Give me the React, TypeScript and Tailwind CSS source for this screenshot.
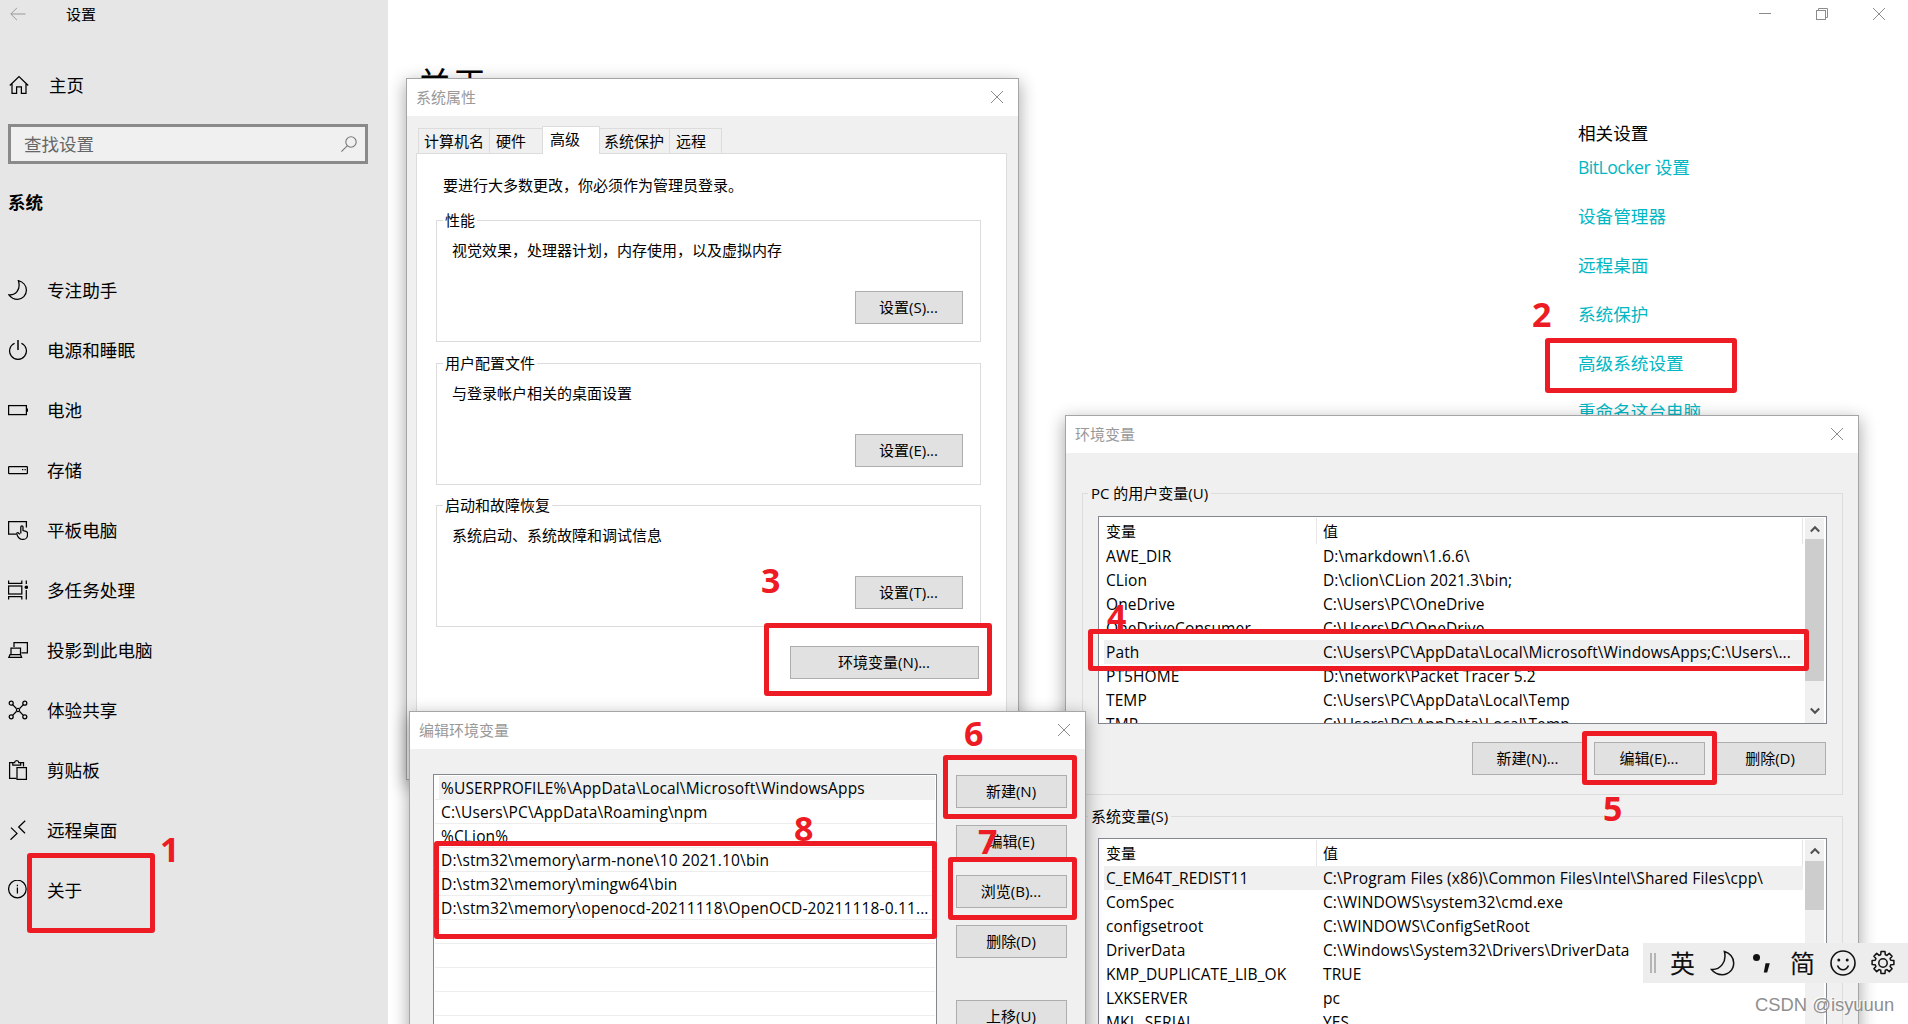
import type { ReactNode } from "react";
import clsx from "clsx";

type Row = [string, string];

const userVars: Row[] = [
  ["AWE_DIR", "D:\\markdown\\1.6.6\\"],
  ["CLion", "D:\\clion\\CLion 2021.3\\bin;"],
  ["OneDrive", "C:\\Users\\PC\\OneDrive"],
  ["OneDriveConsumer", "C:\\Users\\PC\\OneDrive"],
  ["Path", "C:\\Users\\PC\\AppData\\Local\\Microsoft\\WindowsApps;C:\\Users\\..."],
  ["PT5HOME", "D:\\network\\Packet Tracer 5.2"],
  ["TEMP", "C:\\Users\\PC\\AppData\\Local\\Temp"],
  ["TMP", "C:\\Users\\PC\\AppData\\Local\\Temp"],
];

const systemVars: Row[] = [
  ["C_EM64T_REDIST11", "C:\\Program Files (x86)\\Common Files\\Intel\\Shared Files\\cpp\\"],
  ["ComSpec", "C:\\WINDOWS\\system32\\cmd.exe"],
  ["configsetroot", "C:\\WINDOWS\\ConfigSetRoot"],
  ["DriverData", "C:\\Windows\\System32\\Drivers\\DriverData"],
  ["KMP_DUPLICATE_LIB_OK", "TRUE"],
  ["LXKSERVER", "pc"],
  ["MKL_SERIAL", "YES"],
];

const pathEntries = [
  "%USERPROFILE%\\AppData\\Local\\Microsoft\\WindowsApps",
  "C:\\Users\\PC\\AppData\\Roaming\\npm",
  "%CLion%",
  "D:\\stm32\\memory\\arm-none\\10 2021.10\\bin",
  "D:\\stm32\\memory\\mingw64\\bin",
  "D:\\stm32\\memory\\openocd-20211118\\OpenOCD-20211118-0.11...",
  "",
  "",
  "",
  "",
  "",
];

const groups = [
  { title: "性能", text: "视觉效果，处理器计划，内存使用，以及虚拟内存", button: "设置(S)..." },
  { title: "用户配置文件", text: "与登录帐户相关的桌面设置", button: "设置(E)..." },
  { title: "启动和故障恢复", text: "系统启动、系统故障和调试信息", button: "设置(T)..." },
];

const links = ["设备管理器", "远程桌面", "系统保护", "高级系统设置", "重命名这台电脑"];

function Icon({ children, className }: { children: ReactNode; className?: string }) {
  return (
    <svg
      viewBox="0 0 20 20"
      fill="none"
      stroke="currentColor"
      strokeWidth="1.25"
      className={clsx("size-5 shrink-0", className)}
    >
      {children}
    </svg>
  );
}

const navItems: { label: string; icon: ReactNode }[] = [
  { label: "专注助手", icon: <path d="M10.4.7c4.6 1.2 8 4.9 8 9.6 0 5-3.9 9-8.7 9-3.7 0-7-2-8.8-4.5 6.6.8 12.2-5.3 9.5-14.1z" /> },
  {
    label: "电源和睡眠",
    icon: (
      <>
        <path d="M6.6 3.3a8.4 8.4 0 1 0 6.8 0" />
        <path d="M10 0v10" strokeWidth="1.5" />
      </>
    ),
  },
  {
    label: "电池",
    icon: (
      <>
        <rect x=".6" y="5.6" width="17.8" height="9" />
        <path d="M19.4 8.5v3.2" />
      </>
    ),
  },
  {
    label: "存储",
    icon: (
      <>
        <rect x=".6" y="6.6" width="18.8" height="7" rx=".6" />
        <path d="M14 9.5h1.3M16.5 9.5h1.3" />
      </>
    ),
  },
  {
    label: "平板电脑",
    icon: (
      <>
        <path d="M8.5 14H.6V1.6h17.8v6" />
        <path d="M12.8 13.5V7c0-1.6 2.2-1.6 2.2 0v3.6l3 .7c1 .3 1.5 1 1.5 2v1.6c0 2.7-2 4.5-4.5 4.5-3 0-4.5-1.5-5.4-3.5l-.8-2c-.3-1.2 1-1.7 1.8-.9l1.2 1.3" />
      </>
    ),
  },
  {
    label: "多任务处理",
    icon: (
      <>
        <path d="M.6.5v2.9h13.2V.5M.6 19.5v-2.9h13.2v2.9M18.3.5v3.5M18.3 10v9.5" />
        <rect x=".6" y="6" width="13.2" height="8" />
        <circle cx="18.3" cy="7.3" r="1.8" fill="currentColor" stroke="none" />
      </>
    ),
  },
  {
    label: "投影到此电脑",
    icon: (
      <>
        <path d="M6 7V2.6h13.4v10.2h-6" />
        <path d="M3 14.5V8h9.5v6.5M.8 17.4h12.8l-1-2.7H2z" />
      </>
    ),
  },
  {
    label: "体验共享",
    icon: (
      <>
        <path d="m4.6 4.6 3.8 3.9M15.4 4.6l-3.8 3.9M4.6 15.4l3.8-3.9M15.4 15.4l-3.8-3.9" />
        <circle cx="3.2" cy="3.2" r="2" />
        <circle cx="16.8" cy="3.2" r="2" />
        <circle cx="3.2" cy="16.8" r="2" />
        <circle cx="16.8" cy="16.8" r="2" />
        <circle cx="10" cy="10" r="1.6" />
      </>
    ),
  },
  {
    label: "剪贴板",
    icon: (
      <>
        <path d="M8.4 18.4H1.6V2.6H5M12.5 2.6h3v4" />
        <path d="M4.8 5V2.6h1.8c.2-2.6 4-2.6 4.2 0h1.9V5z" />
        <rect x="9" y="7.6" width="9.4" height="11.8" />
      </>
    ),
  },
  { label: "远程桌面", icon: <path d="m3 7.6 6 5.8-6.5 6.3M17.2.8 10.7 7l6.3 6.3" /> },
  {
    label: "关于",
    icon: (
      <>
        <circle cx="9.4" cy="9" r="8.8" />
        <path d="M9.4 7.5v6M9.4 4.8v1.4" />
      </>
    ),
  },
];

function Close() {
  return (
    <svg viewBox="0 0 14 14" fill="none" stroke="#8c8c8c" className="size-3.5">
      <path d="m1 1 12 12M13 1 1 13" />
    </svg>
  );
}

function Dialog({ title, className, children }: { title: string; className: string; children: ReactNode }) {
  return (
    <section
      className={clsx(
        "absolute flex flex-col border border-[#a5a5a5] bg-[#f0f0f0] text-[15px] leading-5 shadow-[0_5px_16px_1px_rgba(0,0,0,0.33)]",
        className,
      )}
    >
      <header className="flex h-[37px] shrink-0 items-center justify-between bg-white pr-[14px] pb-px pl-[9px] text-[#999]">
        <span className="-mt-px">{title}</span>
        <Close />
      </header>
      {children}
    </section>
  );
}

function Button({ children, className = "w-[111px]" }: { children: ReactNode; className?: string }) {
  return (
    <button className={clsx("h-[33px] shrink-0 border border-[#adadad] bg-[#e1e1e1] pr-px text-center leading-[31px]", className)}>
      {children}
    </button>
  );
}

function Chevron({ down }: { down?: boolean }) {
  return (
    <svg viewBox="0 0 10 8" fill="none" stroke="#505050" strokeWidth="2" className="h-2 w-2.5">
      <path d={down ? "m.8 1.5 4.2 4.3 4.2-4.3" : "m.8 6.5 4.2-4.3 4.2 4.3"} />
    </svg>
  );
}

function VarList({ rows, selected, className, thumb }: { rows: Row[]; selected: number; className: string; thumb: string }) {
  return (
    <div className={clsx("ml-[15px] flex w-[729px] overflow-hidden border border-[#828790] bg-white pt-px", className)}>
      <div className="w-[706px] pr-0.5">
        <div className="flex h-[26px] border-r border-[#e5e5e5] leading-[26px]">
          <div className="w-[218px] border-r border-[#e5e5e5] pl-[7px]">变量</div>
          <div className="pl-[6px]">值</div>
        </div>
        {rows.map(([name, value], i) => (
          <div
            key={name}
            className={clsx(
              "ml-[5px] flex h-6 text-[15.5px] leading-[25px] tracking-[0.11px] whitespace-nowrap",
              i === selected && "bg-[#f0f0f0]",
            )}
          >
            <div className="w-[217px] shrink-0 pl-[2px]">{name}</div>
            <div className="pl-[2px]">{value}</div>
          </div>
        ))}
      </div>
      <div className="flex w-[19px] flex-col items-center bg-[#f0f0f0]">
        <div className="flex h-[21px] shrink-0 items-center">
          <Chevron />
        </div>
        <div className={clsx("w-full bg-[#cdcdcd]", thumb)} />
        <div className="mt-auto flex h-[22px] items-center pb-0.5">
          <Chevron down />
        </div>
      </div>
    </div>
  );
}

/* Numbered red markers drawn over the windows */
function Frame({ className }: { className: string }) {
  return <div className={clsx("absolute rounded-[3px] border-[5px] border-[#ed1c24]", className)} />;
}

function Num({ n, className }: { n: number; className: string }) {
  return <div className={clsx("absolute text-[34px] leading-9 font-bold text-[#ed1c24]", className)}>{n}</div>;
}

function Sidebar() {
  return (
    <aside className="flex h-full w-[388px] flex-col bg-[#e6e6e6]">
      <div className="flex h-[29px] items-center pl-2.5 text-[15px]">
        <svg viewBox="0 0 16 14" fill="none" stroke="#999" className="-mt-0.5 mr-10 h-3.5 w-4">
          <path d="M.8 7H15.5M7 .8.8 7 7 13.2" />
        </svg>
        设置
      </div>
      <div className="mt-[41px] flex h-[30px] items-center pl-[9px]">
        <Icon className="mr-5">
          <path d="m.8 10.5 9.2-9 9.2 9M3 8.8v9.6h4.6v-6.6h4.8v6.6H17V8.8" />
        </Icon>
        主页
      </div>
      <div className="mt-6 ml-2 flex h-10 w-[360px] items-center justify-between border-[3px] border-[#8a8a8a] bg-[#f0f0f0] pr-2 pl-[13px] text-[#666]">
        查找设置
        <svg viewBox="0 0 16 16" fill="none" stroke="#777" strokeWidth="1.1" className="size-4">
          <circle cx="10" cy="6" r="5.2" />
          <path d="M6.2 9.8.4 15.6" />
        </svg>
      </div>
      <h2 className="mt-[23px] ml-2 h-[30px] leading-[30px] font-bold">系统</h2>
      <nav className="mt-[43px]">
        {navItems.map((item) => (
          <div key={item.label} className="flex h-[60px] items-center pl-2">
            <Icon className="mr-5">{item.icon}</Icon>
            <span className="-ml-px text-[17.6px]">{item.label}</span>
          </div>
        ))}
      </nav>
    </aside>
  );
}

function SystemProperties() {
  return (
    <Dialog title="系统属性" className="top-[78px] left-[406px] h-[702px] w-[613px]">
      <div className="mt-2.5 flex h-7 items-end pl-[11px]">
        <div className="h-[26px] w-[71px] border-t border-l border-[#dcdcdc] pl-[5px] leading-[25px]">计算机名</div>
        <div className="h-[26px] w-[53px] border-t border-l border-[#dcdcdc] pl-[6px] leading-[25px]">硬件</div>
        <div className="relative h-7 w-[58px] border-x border-t border-[#dcdcdc] bg-white pl-[7px] leading-6">高级</div>
        <div className="h-[26px] w-[69px] border-t border-[#dcdcdc] pl-[4px] leading-[25px]">系统保护</div>
        <div className="h-[26px] w-[53px] border-x border-t border-[#dcdcdc] pl-[6px] leading-[25px]">远程</div>
      </div>
      <div className="-mt-px ml-[9px] flex h-[615px] w-[591px] flex-col border border-[#dcdcdc] bg-white">
        <p className="mt-[21px] mb-1 pl-[26px]">要进行大多数更改，你必须作为管理员登录。</p>
        {groups.map((g, i) => (
          <fieldset
            key={g.title}
            className={clsx("ml-[19px] h-[132px] w-[545px] border border-[#dcdcdc]", i === 2 ? "mt-2.5" : "mt-[11px]")}
          >
            <legend className="ml-[6px] px-[2px]">{g.title}</legend>
            <p className="mt-2.5 pl-[15px]">{g.text}</p>
            <div className="mt-[31px] mr-[17px] flex justify-end">
              <Button className="w-[108px]">{g.button}</Button>
            </div>
          </fieldset>
        ))}
        <div className="mt-[19px] mr-[27px] flex justify-end">
          <Button className="w-[189px]">环境变量(N)...</Button>
        </div>
      </div>
    </Dialog>
  );
}

function EnvironmentVariables() {
  return (
    <Dialog title="环境变量" className="top-[415px] left-[1065px] h-[720px] w-[794px]">
      <fieldset className="mt-[30px] ml-4 h-[312px] w-[761px] shrink-0 border border-[#dcdcdc]">
        <legend className="ml-[5px] px-[3px]">PC 的用户变量(U)</legend>
        <VarList rows={userVars} selected={4} className="mt-[13px] h-[208px]" thumb="h-[142px]" />
        <div className="mt-[18px] mr-4 flex justify-end gap-2.5">
          <Button className="w-[112px]">新建(N)...</Button>
          <Button>编辑(E)...</Button>
          <Button>删除(D)</Button>
        </div>
      </fieldset>
      <fieldset className="mt-[11px] ml-4 h-[300px] w-[761px] shrink-0 border border-[#dcdcdc]">
        <legend className="ml-[5px] px-[3px]">系统变量(S)</legend>
        <VarList rows={systemVars} selected={0} className="mt-3 h-[230px]" thumb="h-[49px]" />
      </fieldset>
    </Dialog>
  );
}

function EditVariable() {
  return (
    <Dialog title="编辑环境变量" className="top-[711px] left-[409px] h-[350px] w-[677px]">
      <div className="flex gap-[19px] pt-[25px] pl-[23px]">
        <div className="h-[300px] w-[504px] overflow-hidden border border-[#828790] bg-white px-px pt-px">
          {pathEntries.map((entry, i) => (
            <div key={i} className="h-6 border-b border-[#ededed] text-[15.5px] leading-[25px] tracking-[0.14px] whitespace-nowrap">
              <div className={clsx("ml-1 h-6 pl-[2px]", i === 0 && "bg-[#f0f0f0]")}>{entry}</div>
            </div>
          ))}
        </div>
        <div className="flex flex-col gap-[17px] pt-px">
          <Button>新建(N)</Button>
          <Button>编辑(E)</Button>
          <Button>浏览(B)...</Button>
          <Button>删除(D)</Button>
          <Button className="mt-[25px] w-[111px]">上移(U)</Button>
        </div>
      </div>
    </Dialog>
  );
}

function ImeBar() {
  return (
    <div className="absolute top-[943px] left-[1643px] flex h-10 w-[265px] items-center bg-[#ededed] pl-[7px] text-[25px] text-[#111]">
      <div className="mr-[14px] h-5 w-[6px] border-x-2 border-[#b5b5b5]" />
      <span className="w-10 leading-[42px]">英</span>
      <svg viewBox="0 0 26 26" fill="none" stroke="currentColor" strokeWidth="1.5" className="mr-[15px] size-[26px] shrink-0">
        <path d="M14.4 1.5c5.5 1.5 9.3 6 9.3 11.5 0 6.6-5 11.7-11.4 11.7-4.5 0-8.3-2-10.8-5.2 8.7.5 15.5-7.5 12.9-18z" />
      </svg>
      <svg viewBox="0 0 20 26" fill="currentColor" className="mr-[18px] ml-px h-[26px] w-5 shrink-0">
        <circle cx="4.5" cy="7.5" r="3.5" />
        <path d="M13.5 13.3h4.3l-2.6 9.2h-3.4z" />
      </svg>
      <span className="w-10 leading-[42px]">简</span>
      <svg viewBox="0 0 26 26" fill="none" stroke="currentColor" strokeWidth="1.6" className="mr-[14px] size-[26px] shrink-0">
        <circle cx="13" cy="13" r="12" />
        <path d="M7.5 15.5c1.2 2.9 3 4.2 5.5 4.2s4.3-1.3 5.5-4.2" />
        <circle cx="8.8" cy="10" r="1.5" fill="currentColor" stroke="none" />
        <circle cx="17.2" cy="10" r="1.5" fill="currentColor" stroke="none" />
      </svg>
      <svg viewBox="0 0 26 26" fill="none" stroke="currentColor" strokeWidth="1.5" strokeLinejoin="round" className="size-[26px] shrink-0">
        <path d="M10.7 4.7 11 1.6h4l.3 3.1 1.6.7 2.4-2 2.8 2.8-2 2.4.7 1.6 3.1.3v4l-3.1.3-.7 1.6 2 2.4-2.8 2.8-2.4-2-1.6.7-.3 3.1h-4l-.3-3.1-1.6-.7-2.4 2-2.8-2.8 2-2.4-.7-1.6-3.1-.3v-4l3.1-.3.7-1.6-2-2.4 2.8-2.8 2.4 2z" />
        <circle cx="13" cy="13" r="4.2" />
      </svg>
    </div>
  );
}

export default function App() {
  return (
    <div className="relative h-[1024px] w-[1908px] overflow-hidden bg-white font-['Open_Sans','Noto_Sans_CJK_SC',sans-serif] text-[17.5px] text-black">
      <div className="flex h-full">
        <Sidebar />
        <main className="flex flex-1 justify-between">
          <h1 className="mt-[61px] ml-[29px] text-[35px] leading-[48px]">关于</h1>
          <div className="w-[330px]">
            <div className="flex h-7 items-center gap-[43px] pl-[180px]">
              <svg viewBox="0 0 14 14" fill="none" stroke="#8c8c8c" className="size-3.5">
                <path d="M1 6.5h12" />
              </svg>
              <svg viewBox="0 0 14 14" fill="none" stroke="#8c8c8c" className="size-3.5">
                <rect x="1.5" y="3.5" width="9" height="9" />
                <path d="M3.5 3.5v-2h9v9h-2" />
              </svg>
              <Close />
            </div>
            <h3 className="mt-[90px] h-[30px] text-[17.6px] leading-[30px]">相关设置</h3>
            <div className="mt-[-4.6px] text-[17.6px] leading-[48.8px] text-[#00b7c3]">
              <div className="h-[48.8px]">
                <span className="tracking-[-0.5px]">BitLocker</span> 设置
              </div>
              {links.map((link) => (
                <div key={link} className="h-[48.8px]">
                  {link}
                </div>
              ))}
            </div>
          </div>
        </main>
      </div>

      <SystemProperties />
      <EnvironmentVariables />
      <EditVariable />
      <ImeBar />

      <Frame className="top-[853px] left-[27px] h-20 w-32" />
      <Frame className="top-[338px] left-[1545px] h-[55px] w-48" />
      <Frame className="top-[623px] left-[764px] h-[73px] w-[228px]" />
      <Frame className="top-[629px] left-[1088px] h-[42px] w-[721px]" />
      <Frame className="top-[731px] left-[1582px] h-[54px] w-[135px]" />
      <Frame className="top-[755px] left-[943px] h-16 w-[134px]" />
      <Frame className="top-[857px] left-[948px] h-[63px] w-[129px]" />
      <Frame className="top-[841px] left-[434px] h-[98px] w-[503px]" />
      <Num n={1} className="top-[831px] left-[160px]" />
      <Num n={2} className="top-[296px] left-[1532px]" />
      <Num n={3} className="top-[562px] left-[761px]" />
      <Num n={4} className="top-[598px] left-[1107px]" />
      <Num n={5} className="top-[790px] left-[1603px]" />
      <Num n={6} className="top-[715px] left-[964px]" />
      <Num n={7} className="top-[823px] left-[978px]" />
      <Num n={8} className="top-[810px] left-[794px]" />

      <div className="absolute top-[992px] left-[1755px] font-['Liberation_Sans',sans-serif] text-[18.4px] leading-[26px] text-[#8f8f8f] [text-shadow:-1px_-1px_1px_#fff]">
        CSDN @isyuuun
      </div>
    </div>
  );
}
